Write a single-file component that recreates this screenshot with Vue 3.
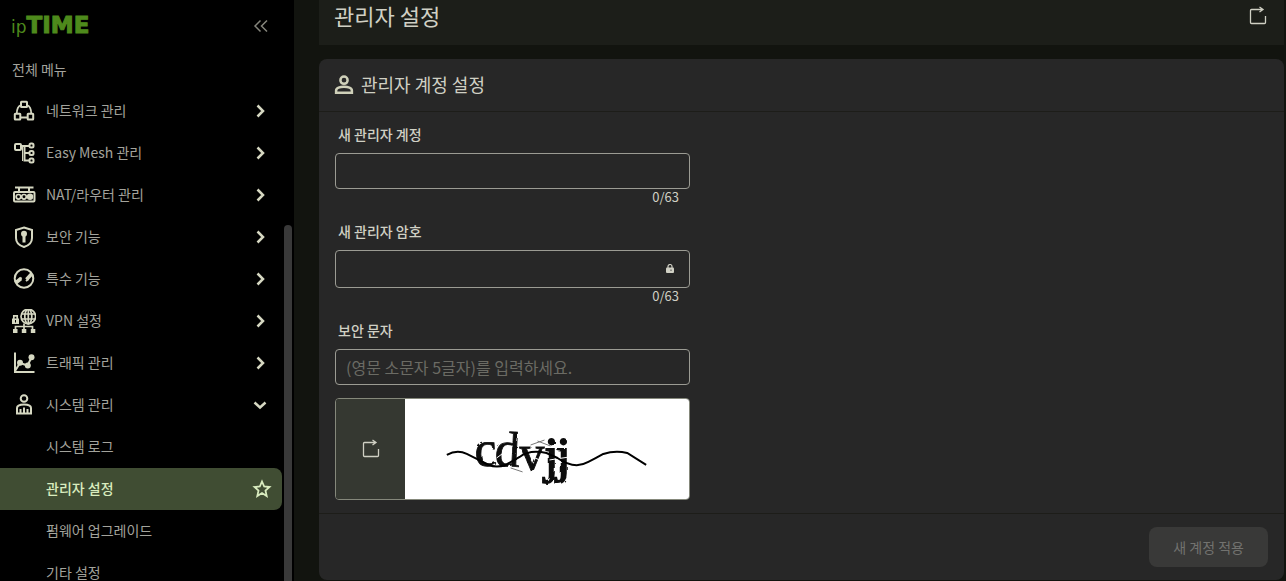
<script setup>
import { ref } from 'vue'

const menu = [
  {
    label: '네트워크 관리',
    icon: '<rect x="9" y="2.800" width="6" height="5.200" rx=".5"/><rect x="2.800" y="14.800" width="5.500" height="5.700" rx=".5"/><rect x="15.700" y="14.800" width="5.500" height="5.700" rx=".5"/><path d="M9 6C6.500 7 4.800 10 4.800 14.500M15 6c2.500 1 4.200 4 4.200 8.500M8.500 18.500h7.500" stroke-width="1.800"/>'
  },
  {
    label: 'Easy Mesh 관리',
    icon: '<rect x="3" y="3" width="6" height="6" rx="1"/><rect x="17.500" y="2.500" width="4" height="4" rx="1.500"/><rect x="17.500" y="10" width="4" height="4" rx="1.500"/><rect x="17.500" y="17.500" width="4" height="4" rx="1.500"/><path d="M9 5h8.500M12.500 5v14.500h5M12.500 12h5"/><path d="M10.500 5v15" stroke-width="1"/>'
  },
  {
    label: 'NAT/라우터 관리',
    icon: '<path d="M3 4.500h18.500M7 5v4M17 5v4" /><rect x="2" y="9" width="20.500" height="9.500" rx="1"/><circle cx="6.500" cy="13.800" r="2.300" stroke-width="1.700"/><circle cx="12" cy="13.800" r="2.300" stroke-width="1.700"/><circle cx="18" cy="13.800" r="3.200" fill="currentColor" stroke="none"/>'
  },
  {
    label: '보안 기능',
    icon: '<path d="M12 2.500 20 5v8c0 4-3 7.500-8 9-5-1.500-8-5-8-9V5z"/><circle cx="12" cy="8.800" r="3" fill="currentColor" stroke="none"/><path d="M12 9v8.500" stroke-width="3"/>'
  },
  {
    label: '특수 기능',
    icon: '<circle cx="12" cy="11.500" r="9.300"/><path d="m3.500 16 5.500-4.500M14.500 12.500l5.500-6" stroke-width="3.600"/><path d="m7.500 12.500 2-2M14 14l2.500-2" />'
  },
  {
    label: 'VPN 설정',
    icon: '<g stroke-width="1.700"><circle cx="16.300" cy="7.500" r="7.300"/><ellipse cx="16.300" cy="7.500" rx="3.500" ry="7.300"/><path d="M9.500 5h13.600M9.500 10h13.600M16.300 0v15"/><path d="M1.800 10V6.800h3.400V10"/><path d="M3.500 20v-2.500h17V20M12 14.500V20"/></g><path d="M0 9.500h7V15H0zM1 20h4.500v4H1zM9.800 20h4.500v4H9.800zM18.800 20h4.500v4h-4.500z" fill="currentColor" stroke="none"/><path d="M3.500 11v2.500" stroke="#000" stroke-width="1"/>'
  },
  {
    label: '트래픽 관리',
    icon: '<path d="M3 1.500V21h19.500M3 20l5-8 7.500 2.500 4-8" /><g fill="currentColor" stroke="none"><circle cx="8" cy="11.800" r="3"/><circle cx="15.800" cy="14.500" r="3"/><circle cx="19.500" cy="6.300" r="3"/></g>'
  },
  {
    label: '시스템 관리',
    icon: '<circle cx="12" cy="5.500" r="3.300"/><path d="M5 20.500v-5.500c0-2.500 2.500-3.500 7-3.500s7 1 7 3.500v5.500z"/><path d="M8.500 16v4.500M12 14.500v6M15.500 16v4.500"/>',
    open: true,
    children: ['시스템 로그', '관리자 설정', '펌웨어 업그레이드', '기타 설정']
  }
]
const active = '관리자 설정'
const account = ref('')
const password = ref('')
const captcha = ref('')
</script>

<template>
  <div class="app">
    <aside class="sidebar">
      <div class="brand">
        <a class="logo" href="#"><span class="ip">ip</span><span class="time">TIME</span></a>
        <button class="collapse" type="button" aria-label="메뉴 접기">
          <svg width="16" height="14" viewBox="0 0 16 14" fill="none" stroke="currentColor" stroke-width="1.5"><path d="M7.500 1.500 2 7l5.500 5.500M14 1.500 8.500 7l5.500 5.500" /></svg>
        </button>
      </div>
      <p class="caption">전체 메뉴</p>
      <nav>
        <ul>
          <li v-for="item in menu" :key="item.label">
            <button class="item" type="button" :aria-expanded="!!item.open">
              <svg class="icon" width="24" height="24" viewBox="0 0 24 24" fill="none" stroke="currentColor" stroke-width="2" v-html="item.icon"></svg>
              <span class="text">{{ item.label }}</span>
              <svg class="arrow" width="14" height="14" viewBox="0 0 14 14" fill="none" stroke="currentColor" stroke-width="2.500">
                <path v-if="item.open" d="m1.500 4.500 5.500 5 5.500-5" />
                <path v-else d="m4.500 1.500 5.500 5.500-5.500 5.500" />
              </svg>
            </button>
            <ul v-if="item.children">
              <li v-for="child in item.children" :key="child">
                <a class="item sub" :class="{ active: child === active }" href="#">
                  <span class="text">{{ child }}</span>
                  <svg v-if="child === active" class="star" width="20" height="20" viewBox="0 0 20 20" fill="none" stroke="currentColor" stroke-width="1.800">
                    <path d="m10 2.500 2.200 5 5.300.500-4 3.600 1.200 5.400-4.700-2.900L5.300 17l1.200-5.400-4-3.600 5.300-.500z" />
                  </svg>
                </a>
              </li>
            </ul>
          </li>
        </ul>
      </nav>
      <div class="thumb"></div>
    </aside>

    <main>
      <header class="page-head">
        <h1>관리자 설정</h1>
        <button class="plain" type="button" aria-label="새로고침">
          <svg width="20" height="20" viewBox="0 0 20 20" fill="none" stroke="currentColor" stroke-width="1.300"><path d="M14.500 3.500h-11a1 1 0 0 0-1 1V16.500a1 1 0 0 0 1 1h13a1 1 0 0 0 1-1V10M11.500 1l3.500 2.500L11.500 6" /></svg>
        </button>
      </header>

      <form class="card" @submit.prevent>
        <div class="card-head">
          <svg width="20" height="20" viewBox="0 0 20 20" fill="none" stroke="currentColor" stroke-width="2.500"><circle cx="10" cy="5.200" r="3.600" /><path d="M2.100 17.700v-2c0-2.600 4-4 7.900-4s7.900 1.400 7.900 4v2z" /></svg>
          <h2>관리자 계정 설정</h2>
        </div>
        <div class="card-body">
          <div class="field">
            <label for="account">새 관리자 계정</label>
            <div class="box"><input id="account" v-model="account" type="text" maxlength="63" /></div>
            <span class="count">{{ account.length }}/63</span>
          </div>
          <div class="field">
            <label for="password">새 관리자 암호</label>
            <div class="box tall">
              <input id="password" v-model="password" type="password" maxlength="63" />
              <svg width="10" height="10" viewBox="0 0 10 10" fill="none" stroke="currentColor" stroke-width="1.200"><path d="M3 5V2.500a2 2 0 0 1 4 0v2.500" /><rect x="1" y="3.500" width="8" height="5.500" rx="1" fill="currentColor" stroke="none" /><path d="M6 5.500v1.500" stroke="#444" stroke-width="1" /></svg>
            </div>
            <span class="count">{{ password.length }}/63</span>
          </div>
          <div class="field">
            <label for="captcha">보안 문자</label>
            <div class="box"><input id="captcha" v-model="captcha" type="text" maxlength="5" placeholder="(영문 소문자 5글자)를 입력하세요." /></div>
          </div>
          <div class="captcha">
            <button class="renew" type="button" aria-label="보안 문자 새로고침">
              <svg width="20" height="20" viewBox="0 0 20 20" fill="none" stroke="currentColor" stroke-width="1.300"><path d="M14.500 3.500h-11a1 1 0 0 0-1 1V16.500a1 1 0 0 0 1 1h13a1 1 0 0 0 1-1V10M11.500 1l3.500 2.500L11.500 6" /></svg>
            </button>
            <svg class="challenge" viewBox="0 0 285 100" preserveAspectRatio="xMidYMid meet">
              <defs>
                <filter id="rough" x="-5%" y="-5%" width="110%" height="110%">
                  <feTurbulence type="fractalNoise" baseFrequency=".12" numOctaves="2" seed="4" result="n" />
                  <feDisplacementMap in="SourceGraphic" in2="n" scale="3" />
                </filter>
              </defs>
              <g filter="url(#rough)" font-family="Liberation Serif, serif" font-size="50" fill="#111" stroke="#111" stroke-width=".8">
                <text x="70" y="67" transform="rotate(-3 80 60)">c</text>
                <text x="90" y="67" transform="rotate(3 100 60)">d</text>
                <text x="115" y="71">v</text>
                <text x="140" y="73" stroke-width="2">j</text>
                <text x="152" y="73" stroke-width="2">j</text>
              </g>
              <path d="M86 35 94 46M92 59l16-12M128 58l12 5M145 61l20-3" stroke="#fff" stroke-width="1" />
              <path d="M106 69l12 4M133 42l13 5M126 46l14-5" stroke="#777" stroke-width="1" />
              <path d="M42 56C49 52 56 52 62 55L84 66Q92 69 101 66L115 58Q125 50 142 54L153 59Q170 71 184 63Q192 59 199 55Q211 51 223 54L242 66" fill="none" stroke="#000" stroke-width="2" />
            </svg>
          </div>
        </div>
        <footer class="card-foot">
          <button class="apply" type="submit" disabled>새 계정 적용</button>
        </footer>
      </form>
    </main>
  </div>
</template>

<style>
body {
  margin: 0;
  background: #12140f;
}
</style>

<style scoped>
* {
  box-sizing: border-box;
}
.app {
  display: flex;
  height: 100vh;
  overflow: hidden;
  background: #12140f;
  color: #d0d0c4;
  font-family: "Noto Sans CJK KR", "Noto Sans", sans-serif;
  font-size: 14px;
}
button, input {
  font: inherit;
  color: inherit;
  border: 0;
  padding: 0;
  margin: 0;
  background: none;
}
h1, h2, p {
  margin: 0;
  font-weight: 400;
}
ul {
  list-style: none;
  margin: 0;
  padding: 0;
}
svg {
  display: block;
  flex: none;
}
.sidebar {
  position: relative;
  flex: 0 0 294px;
  padding-right: 12px;
  overflow: hidden;
  background: #000;
}
.brand {
  display: flex;
  align-items: center;
  justify-content: space-between;
  height: 52px;
  padding: 0 13px 0 11px;
}
.logo {
  display: flex;
  align-items: baseline;
  color: #4e8a1c;
  text-decoration: none;
  line-height: 24px;
}
.ip {
  font-family: "DejaVu Sans", sans-serif;
  font-size: 17px;
}
.time {
  font-family: "DejaVu Sans", sans-serif;
  font-size: 23px;
  font-weight: 700;
  -webkit-text-stroke: 1px #4e8a1c;
}
.collapse {
  color: #85857c;
}
.caption {
  padding-left: 12px;
  height: 38px;
  line-height: 34px;
  color: #a3a39c;
}
.item {
  display: flex;
  align-items: center;
  width: 100%;
  height: 42px;
  padding: 0 15px 0 12px;
  color: #a3a39c;
  line-height: 16px;
  text-align: left;
  text-decoration: none;
}
.text {
  flex: 1;
  margin-left: 10px;
  padding-bottom: 2px;
}
.icon, .arrow {
  color: #d6d8c2;
}
.sub {
  padding: 0 10px 0 36px;
}
.active {
  border-radius: 0 8px 8px 0;
  background: #404d33;
  color: #d9ecbf;
  font-weight: 500;
}
.thumb {
  position: absolute;
  top: 225px;
  right: 2px;
  bottom: 0;
  width: 8px;
  border-radius: 4px 4px 0 0;
  background: #393939;
}
main {
  flex: 1;
  min-width: 0;
  padding: 0 2px 0 25px;
}
.page-head {
  display: flex;
  align-items: center;
  justify-content: space-between;
  height: 45px;
  padding: 0 16px 14px 15px;
  background: #1c1e19;
}
h1 {
  padding-bottom: 2px;
  font-size: 22px;
  line-height: 30px;
}
.card {
  margin-top: 14px;
  border-radius: 8px;
  background: #272727;
}
.card-head {
  display: flex;
  align-items: center;
  gap: 7px;
  height: 53px;
  padding: 0 15px;
  border-bottom: 1px solid #1d1d19;
}
.card-head svg {
  color: #cfd0b9;
}
h2 {
  padding-bottom: 2px;
  font-size: 18px;
  line-height: 26px;
}
.card-body {
  display: flex;
  flex-direction: column;
  max-width: 387px;
  padding: 12px 16px 13px;
}
.field {
  display: flex;
  flex-direction: column;
}
.field + .field {
  margin-top: 17px;
}
label {
  margin: 0 3px 9px;
  line-height: 20px;
  font-weight: 500;
}
.box {
  display: flex;
  align-items: center;
  height: 36px;
  padding: 0 14px 0 10px;
  border: 1px solid #9b9b93;
  border-radius: 4px;
}
.tall {
  height: 38px;
}
.box input {
  flex: 1;
  min-width: 0;
  height: 100%;
  font-size: 16px;
  outline: 0;
}
.box input::placeholder {
  color: #6b6b64;
  opacity: 1;
}
.count {
  align-self: flex-end;
  margin-right: 11px;
  font-size: 13px;
  line-height: 15px;
}
.captcha {
  display: flex;
  height: 102px;
  margin-top: 13px;
  overflow: hidden;
  border: 1px solid #85887b;
  border-radius: 4px;
}
.renew {
  display: flex;
  flex: 0 0 69px;
  align-items: center;
  justify-content: center;
  background: #353831;
}
.challenge {
  flex: 1;
  min-width: 0;
  height: 100%;
  background: #fff;
}
.card-foot {
  display: flex;
  justify-content: flex-end;
  padding: 13px 16px;
  border-top: 1px solid #1d1d19;
}
.apply {
  height: 40px;
  padding: 0 24px;
  border-radius: 8px;
  background: #393938;
  color: #72726f;
}
</style>
